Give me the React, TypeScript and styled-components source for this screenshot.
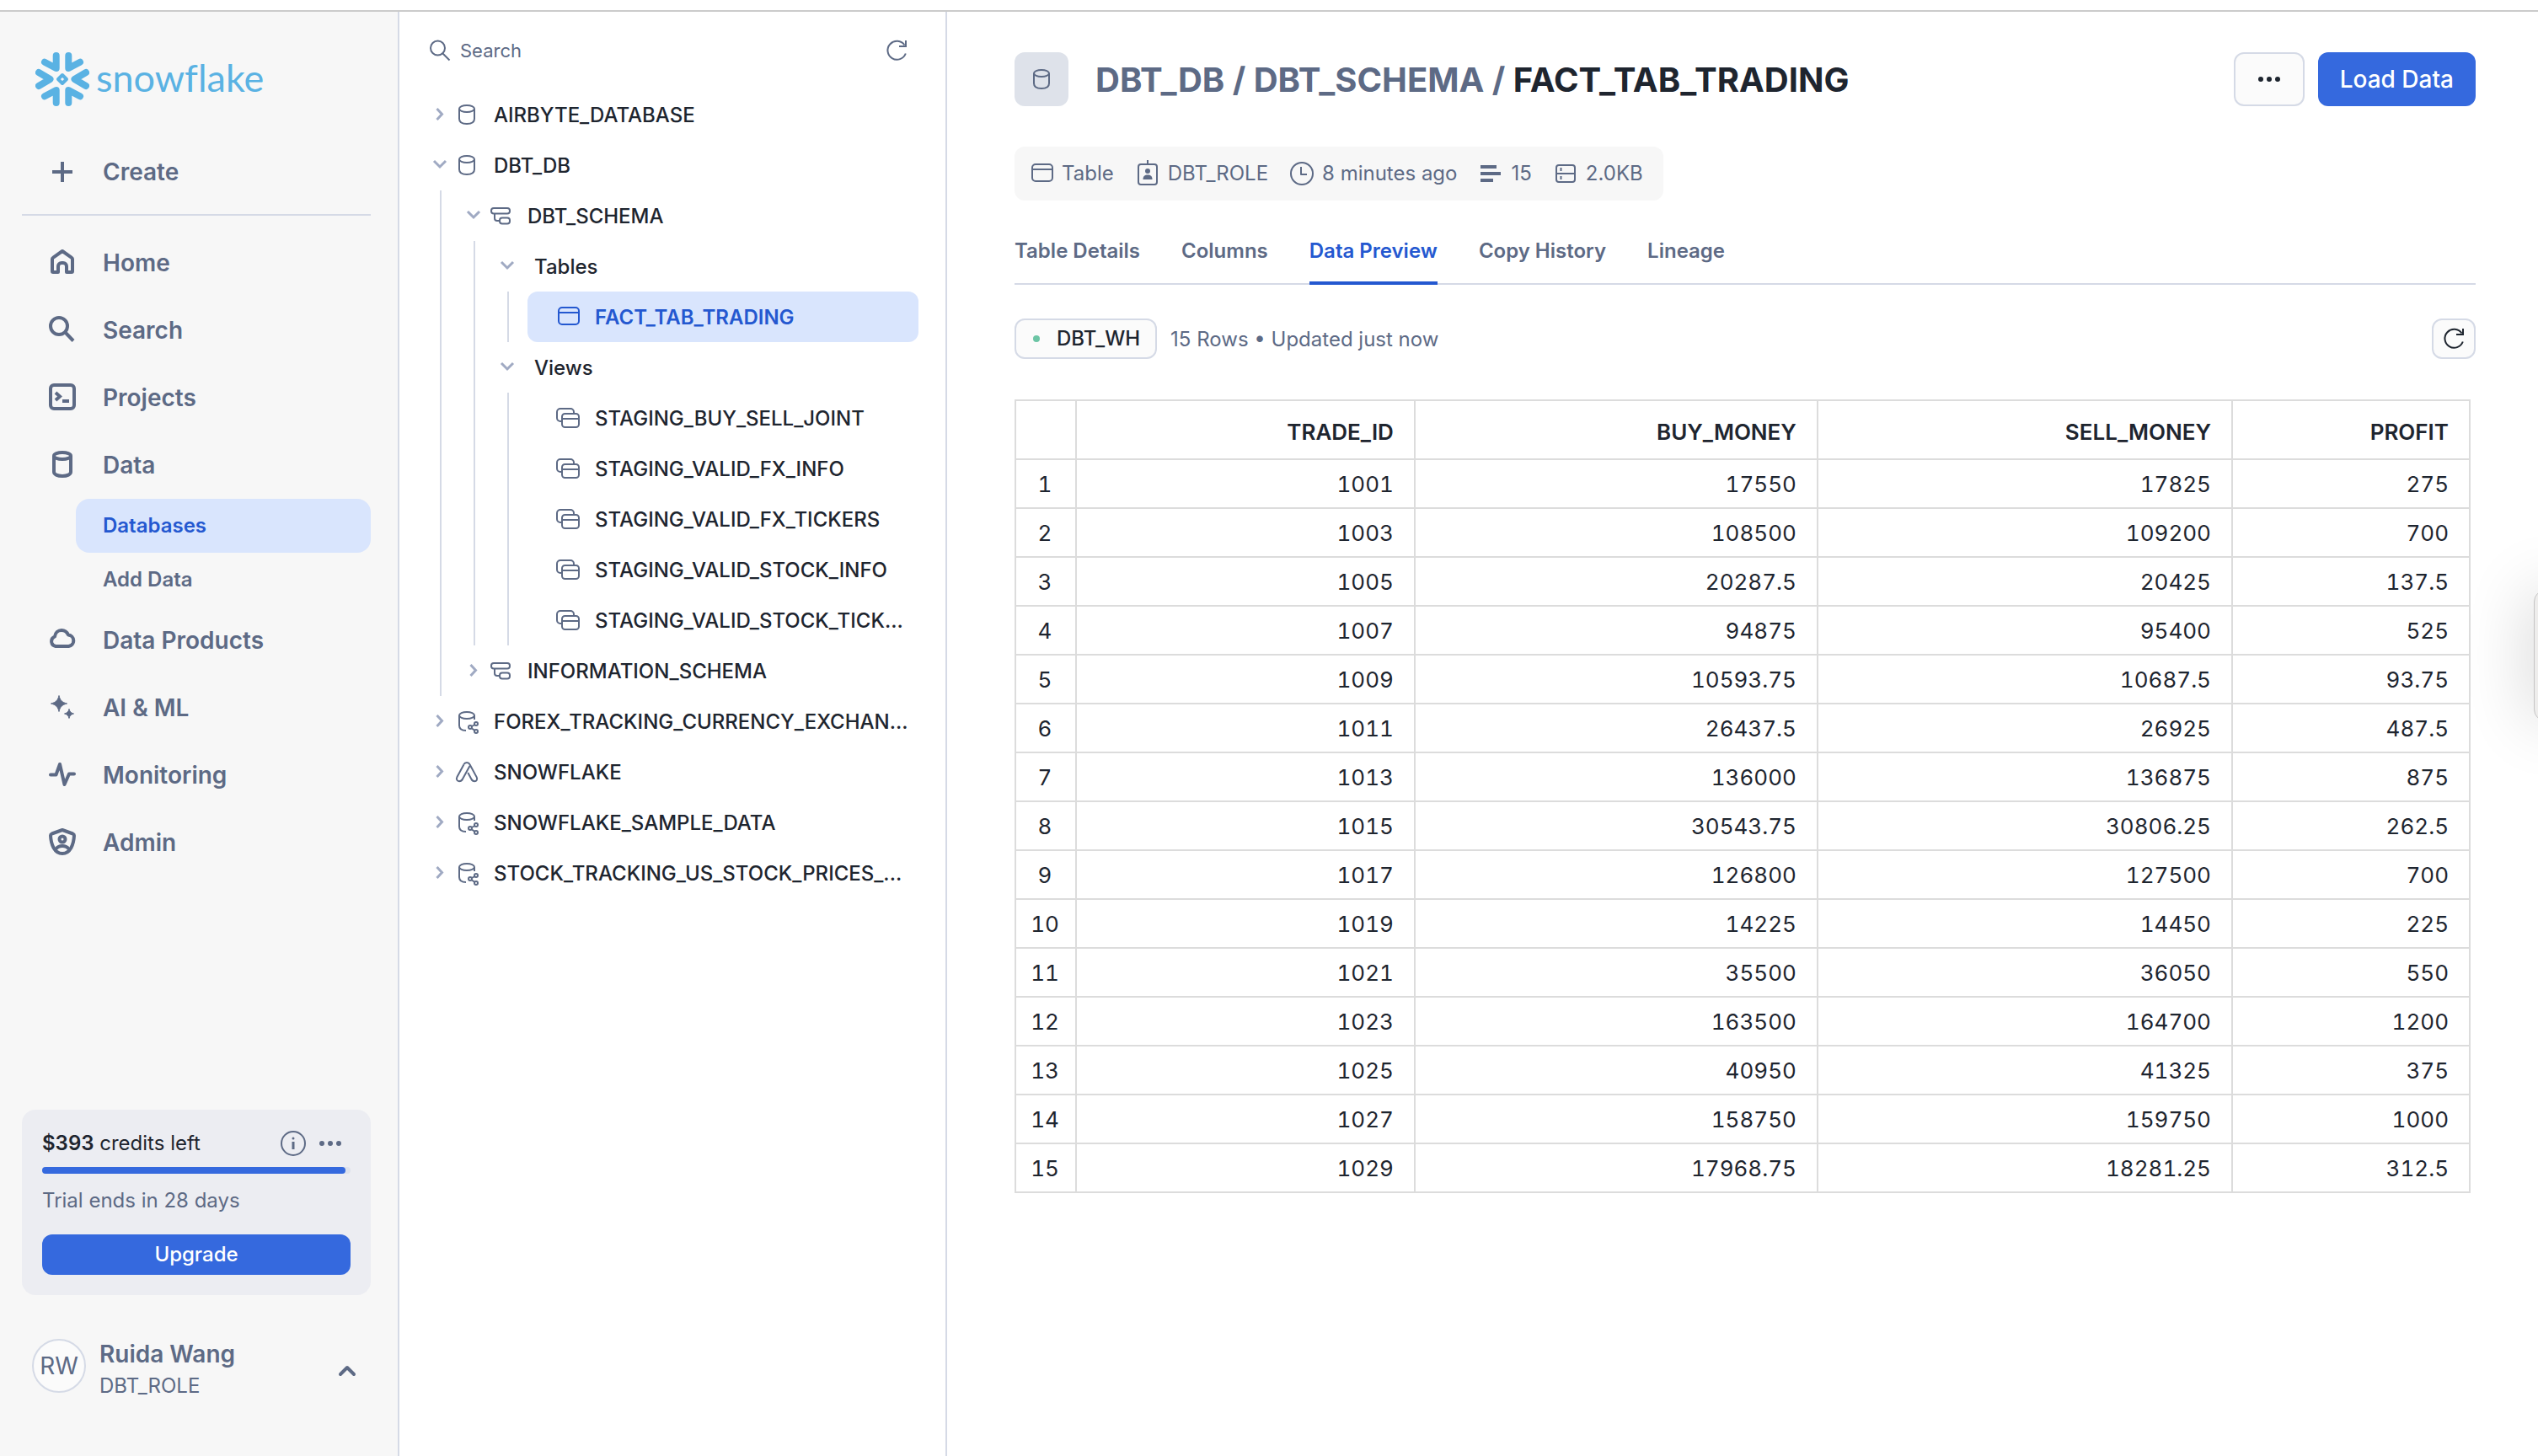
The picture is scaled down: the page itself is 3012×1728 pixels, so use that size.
import React from "react";
import styled, { createGlobalStyle } from "styled-components";

const color = {
  ink: "#1e252f",
  muted: "#5d6a85",
  faint: "#a0aac3",
  line: "#d5dae6",
  grid: "#dcdcdc",
  blue: "#3569de",
  link: "#2458d0",
  selected: "#d9e5fd",
  panel: "#f7f7f7",
  soft: "#fbfbfb",
};

const GlobalStyle = createGlobalStyle`
  *, *::before, *::after { box-sizing: border-box; }
  body {
    margin: 0;
    background: #fff;
    color: ${color.ink};
    font-family: Inter, "Liberation Sans", sans-serif;
    font-size: 24px;
    line-height: 32px;
    font-optical-sizing: none;
  }
  button, input { font: inherit; color: inherit; }
  button { cursor: pointer; padding: 0; border: 0; background: none; }
  a { color: inherit; text-decoration: none; }
  ul { list-style: none; margin: 0; padding: 0; }
  h1 { margin: 0; }
`;

/* ---------- icons (32 × 32 grid) ---------- */

const Svg = styled.svg<{ $tone?: string }>`
  display: block;
  flex: none;
  width: 32px;
  height: 32px;
  overflow: visible;
  fill: none;
  stroke: currentColor;
  stroke-linejoin: round;
  color: ${(p) => p.$tone ?? "inherit"};
`;

type IconProps = { children: React.ReactNode; weight?: number; tone?: string };

const Icon = ({ children, weight = 2, tone }: IconProps) => (
  <Svg viewBox="0 0 32 32" strokeWidth={weight} $tone={tone} aria-hidden="true">
    {children}
  </Svg>
);

const PlusIcon = () => (
  <Icon weight={4}><path d="M16 4v24M4 16h24" /></Icon>
);
const HomeIcon = () => (
  <Icon weight={4}>
    <path d="M5 27a1 1 0 0 1-1-1V11.5a2 2 0 0 1 .9-1.7L16 2l11.100 7.800a2 2 0 0 1 .9 1.700V26a1 1 0 0 1-1 1h-6v-7a4 4 0 0 0-4-4h-2a4 4 0 0 0-4 4v7z" />
  </Icon>
);
const NavSearchIcon = () => (
  <Icon weight={4}><circle cx="12" cy="11" r="10" /><path d="M19 18l10 10.500" /></Icon>
);
const ProjectsIcon = () => (
  <Icon weight={4}>
    <rect x="2" y="1" width="28" height="28" rx="4" />
    <path d="M8 10l5 4.500-5 4.500M16 20h8" strokeLinejoin="miter" />
  </Icon>
);
const DataIcon = () => (
  <Icon weight={4}>
    <ellipse cx="16" cy="5" rx="10" ry="4" />
    <path d="M6 5v19c0 3 4 5 10 5s10-2 10-5V5" />
  </Icon>
);
const CloudIcon = () => (
  <Icon weight={4}>
    <path d="M8 23a6 6 0 0 1-1-11.500C7.500 7 11 4 15 4c4 0 6.500 2 8 5.500A6.800 6.800 0 0 1 23.500 23z" />
  </Icon>
);
const SparkIcon = () => (
  <Icon weight={1}>
    <path fill="currentColor" d="M12 1.500c1.200 5.500 3.500 8 9.500 9.500-6 1.500-8.300 4-9.500 9.500-1.200-5.500-3.500-8-9.500-9.500 6-1.500 8.300-4 9.500-9.500z" />
    <path fill="currentColor" d="M24 17.500c.8 3.200 2 4.600 5.500 5.500-3.500.9-4.700 2.300-5.500 5.500-.8-3.200-2-4.600-5.500-5.500 3.500-.9 4.700-2.300 5.500-5.500z" />
  </Icon>
);
const PulseIcon = () => (
  <Icon weight={4}>
    <path strokeLinecap="round" d="M2 15.500h6.500L13 3l5.500 24L24 14.500h6" />
  </Icon>
);
const ShieldIcon = () => (
  <Icon weight={4}>
    <path d="M16 1l12.500 4.500c1 .4 1.500 1.200 1.500 2.200C29.500 18 25.500 29 16 29S2.500 18 2 7.700c0-1 .5-1.800 1.500-2.200z" />
    <circle cx="16" cy="12" r="3.500" />
    <path d="M8 24c2-3 5-4 8-4s6 1 8 4" />
  </Icon>
);

const SearchIcon = ({ tone }: { tone?: string }) => (
  <Icon weight={2} tone={tone}><circle cx="13.500" cy="13" r="8.500" /><path d="M19.500 19.500l8 8" /></Icon>
);
const RefreshIcon = ({ tone }: { tone?: string }) => (
  <Icon weight={2} tone={tone}>
    <path d="M26.800 19.500A11 11 0 1 1 25.500 9.500" />
    <path d="M27 4v7h-8" strokeLinejoin="miter" />
  </Icon>
);
const ChevronRight = () => (
  <Icon weight={3} tone={color.faint}><path d="M12.500 9l6 6.500-6 6.500" strokeLinejoin="miter" /></Icon>
);
const ChevronDown = () => (
  <Icon weight={3} tone={color.faint}><path d="M9 11l7 7 7-7" strokeLinejoin="miter" /></Icon>
);
const ChevronUp = () => (
  <Icon weight={4}><path d="M8 20l8-8 8 8" strokeLinecap="round" /></Icon>
);
const DatabaseIcon = ({ tone = color.muted }: { tone?: string }) => (
  <Icon tone={tone}>
    <ellipse cx="16" cy="9" rx="9" ry="4" />
    <path d="M7 9v12c0 4 3 6 9 6s9-2 9-6V9" />
  </Icon>
);
const SharedDatabaseIcon = () => (
  <Icon tone={color.muted}>
    <ellipse cx="16" cy="9" rx="9" ry="4" />
    <path d="M7 9v12c0 4 3 6 8 6M25 9v5" />
    <circle cx="20" cy="23" r="2" />
    <circle cx="27" cy="19" r="2" />
    <circle cx="27" cy="28" r="2" />
    <path d="M22 22l3.500-2M22 24.500l3.500 2.500" />
  </Icon>
);
const AppIcon = () => (
  <Icon tone={color.muted}>
    <path d="M12.500 7.200c1.300-2.900 5.700-2.900 7 0l8.200 15.200c1.300 2.600-.2 4.800-2.400 4.800-2 0-3.200-1-4-2.700l-4-7.500" />
    <path d="M12.500 7.200L4.500 22c-1.500 2.700 0 5.200 2.500 5.200 1.900 0 3.200-.9 4-2.700l8.500-15.500" />
  </Icon>
);
const SchemaIcon = () => (
  <Icon tone={color.muted}>
    <rect x="5" y="7" width="22" height="6.500" rx="3" />
    <rect x="15" y="18.500" width="12" height="7" rx="3" />
    <path d="M9 13.500V19a3 3 0 0 0 3 3h3" />
  </Icon>
);
const TableIcon = ({ tone = color.muted }: { tone?: string }) => (
  <Icon tone={tone}>
    <rect x="5" y="5" width="24" height="20" rx="4" />
    <path d="M5 11h24" />
  </Icon>
);
const ViewIcon = () => (
  <Icon tone={color.muted}>
    <path d="M8 20H7a4 4 0 0 1-4-4V9a4 4 0 0 1 4-4h12a4 4 0 0 1 4 4v1" />
    <rect x="9" y="11" width="20" height="16" rx="3.500" />
    <path d="M9 17h20" />
  </Icon>
);
const BadgeIcon = () => (
  <Icon>
    <rect x="5" y="5" width="22" height="24" rx="3" />
    <path d="M16 0v5" />
    <circle cx="16" cy="13" r="3" fill="currentColor" stroke="none" />
    <path d="M10.500 23c0-4 2-5.500 5.500-5.500s5.500 1.500 5.500 5.500z" fill="currentColor" stroke="none" />
  </Icon>
);
const ClockIcon = () => (
  <Icon><circle cx="16" cy="16" r="13" /><path d="M15 8v9h7" /></Icon>
);
const RowsIcon = () => (
  <Icon weight={4}><path d="M4 8h19M4 16h24M4 24h15" /></Icon>
);
const StorageIcon = () => (
  <Icon>
    <rect x="5" y="6" width="22" height="20" rx="3" />
    <path d="M5 16h22M10.500 9v4M10.500 19v4" />
  </Icon>
);
const InfoIcon = () => (
  <Icon><circle cx="16" cy="16" r="14" /><path d="M16 14v9" strokeWidth={3} /><circle cx="16" cy="10" r="1.500" fill="currentColor" stroke="none" /></Icon>
);
const DotsIcon = () => (
  <Icon>
    <g fill="currentColor" stroke="none">
      <circle cx="6" cy="16" r="3" /><circle cx="16" cy="16" r="3" /><circle cx="26" cy="16" r="3" />
    </g>
  </Icon>
);

const FlakeSvg = styled.svg`
  flex: none;
  width: 64px;
  height: 64px;
  fill: none;
  stroke: currentColor;
  stroke-width: 8;
  stroke-linecap: round;
  stroke-linejoin: round;
`;
const Flake = () => (
  <FlakeSvg viewBox="0 0 64 64" aria-hidden="true">
    <path d="M24.700 4v15L11 11.700M39.300 4v15L53 11.700M24.700 60V45L11 52.300M39.300 60V45l13.700 7.300M4 24l13.500 8L4 40M60 24l-13.500 8L60 40" />
    <path d="M32 27l5 5-5 5-5-5z" strokeWidth={4} />
  </FlakeSvg>
);

/* ---------- shell ---------- */

const Shell = styled.div`
  position: relative;
  display: flex;
  flex-direction: column;
  min-height: 100vh;
  overflow: hidden;
`;
const TopEdge = styled.div`
  height: 14px;
  border-bottom: 2px solid #cbcbcb;
`;
const Columns = styled.div`
  flex: 1;
  display: grid;
  grid-template-columns: 474px 650px minmax(0, 1fr);
`;

/* ---------- sidebar ---------- */

const Sidebar = styled.aside`
  display: flex;
  flex-direction: column;
  padding: 48px 32px 63px 26px;
  background: ${color.panel};
  border-right: 2px solid ${color.line};
  color: ${color.muted};
`;
const Brand = styled.a`
  display: flex;
  align-items: center;
  gap: 8px;
  height: 64px;
  margin: 0 0 38px 16px;
  && { color: #5ab2e3; }
`;
const BrandName = styled.span`
  padding-bottom: 4px;
  font-family: Lato, sans-serif;
  font-size: 45px;
  line-height: 56px;
  font-variant-ligatures: none;
`;
const NavItem = styled.a`
  display: flex;
  align-items: center;
  gap: 32px;
  height: 80px;
  padding-left: 32px;
  font-size: 28px;
  font-weight: 600;
`;
const NavButton = styled(NavItem).attrs({ as: "button", type: "button" })`
  width: 100%;
`;
const Rule = styled.hr`
  width: 100%;
  margin: 10px 0 16px;
  border: 0;
  border-top: 2px solid ${color.line};
`;
const SubItem = styled.a<{ $active?: boolean }>`
  display: flex;
  align-items: center;
  height: 64px;
  margin-left: 64px;
  padding-left: 32px;
  border-radius: 16px;
  font-weight: 600;
  background: ${(p) => (p.$active ? color.selected : "transparent")};
  && { color: ${(p) => (p.$active ? color.link : color.muted)}; }
`;
const Credits = styled.section`
  display: flex;
  flex-direction: column;
  margin-top: auto;
  padding: 24px;
  border-radius: 16px;
  background: #ecedf2;
`;
const CreditsHead = styled.div`
  display: flex;
  align-items: center;
  gap: 12px;
  color: ${color.ink};
`;
const CreditsText = styled.p`
  flex: 1;
  margin: 0;
  b { font-weight: 600; }
`;
const TinyButton = styled.button`
  display: flex;
  color: ${color.muted};
  &:last-child { padding-right: 8px; }
`;
const Track = styled.div`
  height: 8px;
  margin-top: 12px;
  border-radius: 4px;
  background: #dee2ec;
`;
const Fill = styled.div`
  height: 100%;
  border-radius: 4px;
  background: ${color.blue};
`;
const Trial = styled.p`
  margin: 16px 0 24px;
`;
const PrimaryButton = styled.button<{ $large?: boolean }>`
  height: ${(p) => (p.$large ? 64 : 48)}px;
  padding: 0 26px;
  border-radius: 12px;
  background: ${color.blue};
  color: #fff;
  font-size: ${(p) => (p.$large ? 28 : 24)}px;
  font-weight: 500;
`;
const User = styled.button`
  display: flex;
  align-items: center;
  gap: 16px;
  margin-top: 52px;
  padding: 0 12px;
  text-align: left;
`;
const Avatar = styled.span`
  align-self: flex-start;
  display: grid;
  place-items: center;
  width: 64px;
  height: 64px;
  border: 2px solid ${color.line};
  border-radius: 50%;
  background: ${color.soft};
  font-size: 28px;
`;
const UserText = styled.span`
  flex: 1;
  display: flex;
  flex-direction: column;
  line-height: 40px;
`;
const UserName = styled.span`
  font-size: 28px;
  line-height: 36px;
  font-weight: 600;
`;

const nav = [
  { label: "Home", icon: <HomeIcon /> },
  { label: "Search", icon: <NavSearchIcon /> },
  { label: "Projects", icon: <ProjectsIcon /> },
  { label: "Data", icon: <DataIcon />, children: ["Databases", "Add Data"] },
  { label: "Data Products", icon: <CloudIcon /> },
  { label: "AI & ML", icon: <SparkIcon /> },
  { label: "Monitoring", icon: <PulseIcon /> },
  { label: "Admin", icon: <ShieldIcon /> },
];

const SideNav = () => (
  <Sidebar>
    <Brand href="#"><Flake /><BrandName>snowflake</BrandName></Brand>
    <NavButton><PlusIcon />Create</NavButton>
    <Rule />
    <nav>
      {nav.map((item) => (
        <React.Fragment key={item.label}>
          <NavItem href="#">{item.icon}{item.label}</NavItem>
          {item.children?.map((sub) => (
            <SubItem key={sub} href="#" $active={sub === "Databases"}>{sub}</SubItem>
          ))}
        </React.Fragment>
      ))}
    </nav>
    <Credits>
      <CreditsHead>
        <CreditsText><b>$393</b> credits left</CreditsText>
        <TinyButton type="button" aria-label="Credit details"><InfoIcon /></TinyButton>
        <TinyButton type="button" aria-label="More"><DotsIcon /></TinyButton>
      </CreditsHead>
      <Track><Fill style={{ width: `${(393 / 400) * 100}%` }} /></Track>
      <Trial>Trial ends in 28 days</Trial>
      <PrimaryButton type="button">Upgrade</PrimaryButton>
    </Credits>
    <User type="button">
      <Avatar>RW</Avatar>
      <UserText><UserName>Ruida Wang</UserName>DBT_ROLE</UserText>
      <ChevronUp />
    </User>
  </Sidebar>
);

/* ---------- object tree ---------- */

const TreePanel = styled.section`
  padding: 0 32px;
  border-right: 2px solid ${color.line};
`;
const TreeHead = styled.div`
  display: flex;
  align-items: center;
  justify-content: space-between;
  height: 92px;
  padding-right: 10px;
  color: ${color.muted};
`;
const SearchField = styled.label`
  display: flex;
  align-items: center;
  gap: 8px;
`;
const SearchInput = styled.input`
  width: 400px;
  padding: 0;
  border: 0;
  outline: 0;
  background: none;
  font-size: 22px;
  &::placeholder { color: ${color.muted}; opacity: 1; }
`;
const IconButton = styled.button`
  display: flex;
`;
const Row = styled.button<{ $leaf?: boolean; $selected?: boolean }>`
  display: flex;
  align-items: center;
  width: 100%;
  height: 60px;
  padding-left: ${(p) => (p.$leaf ? 32 : 0)}px;
  border-radius: 12px;
  text-align: left;
  white-space: nowrap;
  font-weight: ${(p) => (p.$selected ? 600 : 500)};
  background: ${(p) => (p.$selected ? color.selected : "transparent")};
  color: ${(p) => (p.$selected ? color.link : color.ink)};
`;
const RowLabel = styled.span`
  padding: 2px 0 0 16px;
`;
const Branch = styled.ul`
  margin-left: 16px;
  padding-left: 22px;
  border-left: 2px solid ${color.line};
`;

type Node = {
  label: string;
  kind: "db" | "shared" | "app" | "schema" | "folder" | "table" | "view";
  selected?: boolean;
  children?: Node[];
};

const tree: Node[] = [
  { label: "AIRBYTE_DATABASE", kind: "db" },
  {
    label: "DBT_DB",
    kind: "db",
    children: [
      {
        label: "DBT_SCHEMA",
        kind: "schema",
        children: [
          { label: "Tables", kind: "folder", children: [{ label: "FACT_TAB_TRADING", kind: "table", selected: true }] },
          {
            label: "Views",
            kind: "folder",
            children: [
              { label: "STAGING_BUY_SELL_JOINT", kind: "view" },
              { label: "STAGING_VALID_FX_INFO", kind: "view" },
              { label: "STAGING_VALID_FX_TICKERS", kind: "view" },
              { label: "STAGING_VALID_STOCK_INFO", kind: "view" },
              { label: "STAGING_VALID_STOCK_TICK...", kind: "view" },
            ],
          },
        ],
      },
      { label: "INFORMATION_SCHEMA", kind: "schema" },
    ],
  },
  { label: "FOREX_TRACKING_CURRENCY_EXCHAN...", kind: "shared" },
  { label: "SNOWFLAKE", kind: "app" },
  { label: "SNOWFLAKE_SAMPLE_DATA", kind: "shared" },
  { label: "STOCK_TRACKING_US_STOCK_PRICES_...", kind: "shared" },
];

const kindIcon = {
  db: <DatabaseIcon />,
  shared: <SharedDatabaseIcon />,
  app: <AppIcon />,
  schema: <SchemaIcon />,
  folder: null,
  table: <TableIcon tone={color.link} />,
  view: <ViewIcon />,
};

const TreeNode = ({ node }: { node: Node }) => {
  const leaf = node.kind === "table" || node.kind === "view";
  return (
    <li>
      <Row type="button" $leaf={leaf} $selected={node.selected}>
        {!leaf && (node.children ? <ChevronDown /> : <ChevronRight />)}
        {kindIcon[node.kind]}
        <RowLabel>{node.label}</RowLabel>
      </Row>
      {node.children && (
        <Branch>
          {node.children.map((child) => <TreeNode key={child.label} node={child} />)}
        </Branch>
      )}
    </li>
  );
};

const ObjectTree = () => (
  <TreePanel>
    <TreeHead>
      <SearchField>
        <SearchIcon />
        <SearchInput type="text" placeholder="Search" aria-label="Search objects" />
      </SearchField>
      <IconButton type="button" aria-label="Refresh objects"><RefreshIcon /></IconButton>
    </TreeHead>
    <ul>{tree.map((node) => <TreeNode key={node.label} node={node} />)}</ul>
  </TreePanel>
);

/* ---------- main ---------- */

const Main = styled.main`
  display: flex;
  flex-direction: column;
  padding: 48px 74px 48px 80px;
`;
const TitleBar = styled.header`
  display: flex;
  align-items: center;
  gap: 16px;
`;
const TitleIcon = styled.span`
  display: grid;
  place-items: center;
  width: 64px;
  height: 64px;
  border-radius: 12px;
  background: #dee2ea;
`;
const Title = styled.h1`
  flex: 1;
  padding: 2px 0 0 16px;
  font-size: 40px;
  line-height: 48px;
  font-weight: 700;
  color: ${color.muted};
  strong { font-weight: 700; color: ${color.ink}; }
`;
const OutlineButton = styled.button<{ $width: number; $height: number }>`
  display: grid;
  place-items: center;
  width: ${(p) => p.$width}px;
  height: ${(p) => p.$height}px;
  border: 2px solid ${color.line};
  border-radius: 12px;
  background: ${color.soft};
`;
const SmallDots = styled.span`
  display: flex;
  gap: 4px;
  &::before, &::after, i { content: ""; width: 6px; height: 6px; border-radius: 50%; background: ${color.ink}; }
`;
const Meta = styled.ul`
  display: flex;
  align-self: flex-start;
  align-items: center;
  gap: 24px;
  height: 64px;
  margin-top: 48px;
  padding: 0 24px 0 16px;
  border-radius: 12px;
  background: ${color.panel};
  color: ${color.muted};
`;
const MetaItem = styled.li`
  display: flex;
  align-items: center;
  gap: 8px;
`;
const Tabs = styled.nav`
  display: flex;
  gap: 49px;
  height: 80px;
  margin-top: 20px;
  border-bottom: 2px solid ${color.line};
`;
const Tab = styled.a<{ $active?: boolean }>`
  display: flex;
  align-items: center;
  height: 80px;
  padding-top: 4px;
  border-bottom: 4px solid ${(p) => (p.$active ? color.link : "transparent")};
  font-weight: 600;
  && { color: ${(p) => (p.$active ? color.link : color.muted)}; }
`;
const StatusBar = styled.div`
  display: flex;
  align-items: center;
  gap: 16px;
  margin: 40px 0 48px;
  color: ${color.muted};
`;
const Warehouse = styled.button`
  display: flex;
  align-items: center;
  gap: 20px;
  height: 48px;
  padding: 0 18px 0 20px;
  border: 2px solid ${color.line};
  border-radius: 12px;
  background: ${color.soft};
  color: ${color.ink};
  font-weight: 500;
`;
const Dot = styled.span`
  width: 8px;
  height: 8px;
  border-radius: 50%;
  background: #6cc5a5;
`;
const StatusText = styled.span`
  flex: 1;
  padding-top: 2px;
`;
const TableWrap = styled.div`
  padding-right: 6px;
`;
const Grid = styled.table`
  width: 100%;
  table-layout: fixed;
  border-collapse: collapse;
  font-size: 26px;
  font-variant-numeric: tabular-nums;
`;
const Col = styled.col<{ $share: number }>`
  width: ${(p) => p.$share}%;
`;
const NumberCol = styled.col`
  width: 72px;
`;
const HeadCell = styled.th`
  height: 70px;
  padding: 6px 24px 0 0;
  border: 2px solid ${color.grid};
  text-align: right;
  font-weight: 600;
`;
const Cell = styled.td`
  height: 58px;
  padding: 2px 24px 0 0;
  border: 2px solid ${color.grid};
  text-align: right;
`;
const RowNumber = styled.th`
  padding: 2px 2px 0 0;
  border: 2px solid ${color.grid};
  text-align: center;
  font-weight: 400;
`;
const EdgeHandle = styled.div`
  position: absolute;
  top: 700px;
  right: -43px;
  width: 48px;
  height: 156px;
  border: 1px solid #c4c4c4;
  border-radius: 14px;
  background: #eeedec;
  box-shadow: 0 0 80px rgba(0, 0, 0, 0.2);
`;

const tabs = ["Table Details", "Columns", "Data Preview", "Copy History", "Lineage"];
const headers = ["TRADE_ID", "BUY_MONEY", "SELL_MONEY", "PROFIT"];
const rows = [
  ["1001", "17550", "17825", "275"],
  ["1003", "108500", "109200", "700"],
  ["1005", "20287.5", "20425", "137.5"],
  ["1007", "94875", "95400", "525"],
  ["1009", "10593.75", "10687.5", "93.75"],
  ["1011", "26437.5", "26925", "487.5"],
  ["1013", "136000", "136875", "875"],
  ["1015", "30543.75", "30806.25", "262.5"],
  ["1017", "126800", "127500", "700"],
  ["1019", "14225", "14450", "225"],
  ["1021", "35500", "36050", "550"],
  ["1023", "163500", "164700", "1200"],
  ["1025", "40950", "41325", "375"],
  ["1027", "158750", "159750", "1000"],
  ["1029", "17968.75", "18281.25", "312.5"],
];

export default function App() {
  return (
    <>
      <GlobalStyle />
      <Shell>
        <TopEdge />
        <Columns>
          <SideNav />
          <ObjectTree />
          <Main>
            <TitleBar>
              <TitleIcon><DatabaseIcon /></TitleIcon>
              <Title>DBT_DB / DBT_SCHEMA / <strong>FACT_TAB_TRADING</strong></Title>
              <OutlineButton type="button" aria-label="More actions" $width={84} $height={64}>
                <SmallDots><i /></SmallDots>
              </OutlineButton>
              <PrimaryButton type="button" $large>Load Data</PrimaryButton>
            </TitleBar>
            <Meta>
              <MetaItem><TableIcon />Table</MetaItem>
              <MetaItem><BadgeIcon />DBT_ROLE</MetaItem>
              <MetaItem><ClockIcon />8 minutes ago</MetaItem>
              <MetaItem><RowsIcon />15</MetaItem>
              <MetaItem><StorageIcon />2.0KB</MetaItem>
            </Meta>
            <Tabs>
              {tabs.map((tab) => (
                <Tab key={tab} href="#" $active={tab === "Data Preview"}>{tab}</Tab>
              ))}
            </Tabs>
            <StatusBar>
              <Warehouse type="button"><Dot />DBT_WH</Warehouse>
              <StatusText>15 Rows • Updated just now</StatusText>
              <OutlineButton type="button" aria-label="Refresh preview" $width={52} $height={48}>
                <RefreshIcon tone={color.ink} />
              </OutlineButton>
            </StatusBar>
            <TableWrap>
              <Grid>
                <colgroup>
                  <NumberCol />
                  <Col $share={24.300} />
                  <Col $share={28.900} />
                  <Col $share={29.750} />
                  <Col $share={17.050} />
                </colgroup>
                <thead>
                  <tr>
                    <HeadCell as="td" />
                    {headers.map((h) => <HeadCell key={h} scope="col">{h}</HeadCell>)}
                  </tr>
                </thead>
                <tbody>
                  {rows.map((row, i) => (
                    <tr key={row[0]}>
                      <RowNumber scope="row">{i + 1}</RowNumber>
                      {row.map((value, c) => <Cell key={headers[c]}>{value}</Cell>)}
                    </tr>
                  ))}
                </tbody>
              </Grid>
            </TableWrap>
          </Main>
        </Columns>
        <EdgeHandle />
      </Shell>
    </>
  );
}
